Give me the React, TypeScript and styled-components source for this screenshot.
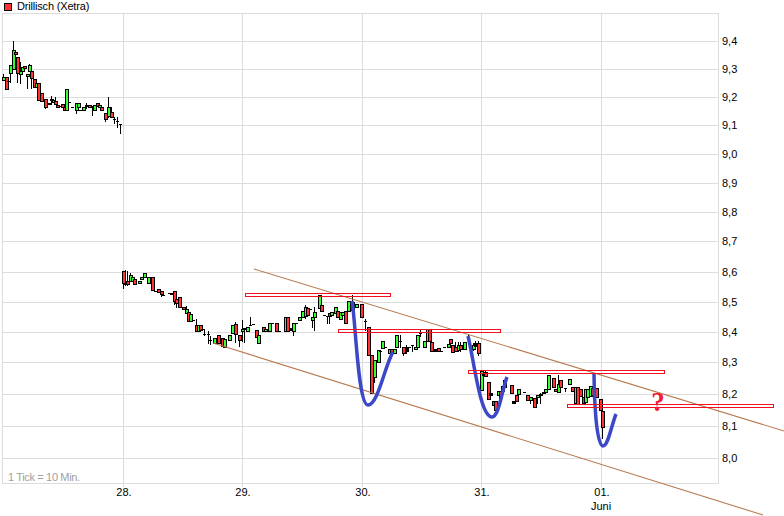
import styled, { createGlobalStyle } from "styled-components";

const GlobalStyle = createGlobalStyle`
  html, body {
    margin: 0;
    padding: 0;
    background: #fff;
  }
`;

// x, body top, body bottom, colour, wick top, wick bottom
type Candle = [number, number, number, "g" | "r" | "k", number?, number?];

const candles: Candle[] = [
  // first day, end of the week before
  [3, 77, 80, "g", 74, 80], [6, 77, 89, "r"], [8, 81, 81, "k"], [10, 65, 73, "g", 65, 82], [13, 50, 69, "g", 41, 69],
  [15, 52, 54, "r"], [17, 57, 73, "r", 57, 82], [20, 71, 74, "g", 62, 83], [22, 67, 71, "g"],
  [24, 66, 68, "r"], [27, 74, 76, "g", 74, 88], [29, 65, 71, "g", 64, 71], [31, 71, 78, "r", 71, 88],
  [34, 79, 87, "r"], [36, 83, 87, "g"], [38, 83, 100, "r"], [41, 93, 101, "r"],
  [45, 99, 107, "r", 99, 108], [48, 103, 104, "g"], [51, 99, 100, "k", 96, 104], [53, 100, 102, "g"],
  [55, 101, 104, "r", 97, 104], [57, 105, 107, "r"], [60, 106, 106, "k"], [62, 104, 107, "r"],
  [64, 107, 110, "r"], [66, 89, 110, "g"], [69, 102, 102, "k"], [72, 107, 107, "k"],
  [76, 103, 110, "g", 103, 113], [78, 103, 107, "g"], [80, 110, 110, "k"], [83, 107, 110, "g"],
  [86, 105, 106, "k", 103, 108], [89, 105, 107, "r"], [92, 106, 106, "k", 106, 115], [94, 105, 110, "g"],
  [97, 103, 106, "r"], [99, 105, 107, "g"], [101, 107, 110, "r"], [105, 113, 119, "r", 113, 121],
  [108, 107, 116, "g", 97, 117], [111, 112, 117, "r", 107, 117], [114, 119, 119, "k", 117, 123],
  [117, 121, 121, "k", 117, 127], [120, 124, 124, "k", 124, 133],
  // second day
  [123, 271, 283, "r", 271, 288], [125, 283, 284, "k", 270, 285], [127, 281, 284, "r", 271, 285],
  [130, 275, 281, "g", 273, 281], [132, 277, 281, "g"], [134, 279, 284, "r"], [139, 281, 283, "g"],
  [141, 277, 279, "g"], [144, 273, 277, "g"], [148, 277, 283, "g"], [152, 277, 290, "r"],
  [155, 291, 291, "k"], [158, 289, 292, "r"], [161, 291, 294, "r", 291, 296], [163, 295, 295, "k"],
  [169, 293, 293, "k"], [171, 293, 294, "k"], [174, 291, 301, "r", 291, 304], [176, 299, 303, "r", 299, 307],
  [179, 297, 307, "r"], [183, 307, 309, "r"], [186, 309, 313, "g", 306, 313], [188, 312, 321, "r"],
  [190, 314, 321, "g"], [193, 320, 320, "k"], [196, 325, 331, "r", 319, 331], [198, 325, 331, "g"],
  [200, 325, 330, "r"], [202, 329, 329, "k"], [204, 334, 334, "k", 329, 335], [208, 334, 334, "k", 331, 343],
  [210, 340, 340, "k", 336, 344], [214, 338, 343, "g"], [218, 335, 343, "r"], [222, 338, 346, "r"],
  [224, 339, 347, "g"], [229, 335, 340, "g"], [232, 325, 333, "g"], [235, 324, 334, "r", 322, 342],
  [239, 335, 340, "r", 335, 346], [242, 329, 331, "g", 320, 341], [244, 328, 329, "k", 328, 342],
  [247, 327, 331, "g"], [250, 325, 325, "k", 317, 325], [253, 324, 324, "k"], [256, 330, 337, "r"],
  [258, 335, 343, "g"], [263, 327, 331, "r"], [265, 329, 331, "g"], [269, 323, 331, "g"], [272, 323, 323, "k"],
  [276, 323, 331, "r"], [279, 331, 331, "k"], [285, 317, 331, "g"], [287, 317, 331, "r"], [290, 328, 330, "k"],
  [293, 323, 331, "g", 323, 335], [296, 323, 323, "k"], [299, 317, 320, "g"], [302, 311, 317, "g"],
  [305, 307, 316, "g", 305, 318], [307, 308, 315, "r"],
  [310, 309, 309, "k"], [312, 317, 320, "g", 317, 327], [314, 312, 317, "g", 307, 330], [319, 295, 308, "g"],
  [321, 305, 311, "r"], [324, 315, 315, "k"], [327, 316, 316, "k", 316, 323], [329, 313, 316, "r", 313, 323],
  [331, 312, 315, "g"], [335, 307, 313, "g"], [337, 311, 317, "r"], [340, 312, 319, "g"], [342, 312, 315, "g"],
  [345, 311, 323, "r"], [348, 301, 311, "g"], [352, 302, 310, "r", 295, 310], [356, 304, 307, "g"],
  [361, 304, 317, "r"], [365, 321, 321, "k", 319, 330],
  // third day
  [368, 327, 355, "r"], [371, 355, 393, "r"], [374, 360, 377, "g", 360, 382], [378, 350, 362, "g"],
  [380, 351, 351, "k"], [382, 341, 348, "g"], [385, 347, 347, "k"], [389, 349, 353, "g"],
  [391, 349, 353, "r"], [394, 349, 353, "g"], [396, 335, 347, "g"], [400, 341, 341, "k", 335, 347],
  [403, 347, 353, "r", 347, 355], [406, 347, 351, "k", 345, 353], [409, 347, 347, "k"], [412, 345, 345, "k", 345, 351],
  [415, 347, 349, "g"], [417, 335, 347, "g"], [420, 333, 333, "k", 330, 336], [424, 341, 347, "g"],
  [427, 329, 341, "g"], [429, 329, 341, "r"], [431, 342, 351, "r"], [434, 349, 351, "k"], [438, 348, 351, "r"],
  [441, 351, 351, "k"], [444, 347, 347, "k"], [448, 344, 347, "g"], [450, 339, 343, "r"], [452, 345, 352, "r"],
  [455, 347, 351, "r", 342, 351], [458, 345, 350, "g", 342, 351], [460, 345, 349, "r", 342, 351], [464, 342, 349, "g"],
  [468, 337, 337, "k", 334, 343], [473, 345, 349, "g", 343, 350], [475, 343, 346, "k", 341, 346],
  [478, 343, 353, "r", 341, 355],
  // fourth day
  [481, 371, 390, "g"], [483, 373, 375, "k"], [485, 372, 376, "r", 370, 376], [488, 382, 399, "r"],
  [490, 393, 395, "k", 393, 396], [493, 401, 405, "r"], [495, 401, 410, "r"], [498, 391, 395, "g"],
  [500, 391, 398, "r"], [502, 386, 391, "g"], [504, 380, 387, "g"], [511, 385, 393, "r"], [513, 401, 403, "k"],
  [516, 395, 401, "r"], [518, 389, 394, "g"], [524, 392, 392, "k"], [527, 395, 400, "r"], [530, 397, 400, "g", 397, 403],
  [534, 398, 407, "r"], [537, 395, 397, "g", 395, 403], [540, 394, 395, "k", 393, 403], [543, 392, 393, "k"],
  [545, 389, 392, "g"], [548, 375, 389, "g"], [553, 378, 387, "r"], [555, 389, 391, "r"], [558, 384, 392, "g", 375, 392],
  [560, 380, 387, "r"], [565, 388, 388, "k", 388, 391], [569, 379, 384, "g"], [572, 387, 391, "r"],
  [575, 387, 403, "g"], [577, 387, 404, "r"], [580, 389, 396, "r"], [583, 397, 403, "r"], [585, 389, 402, "g"],
  [587, 389, 397, "g"], [590, 386, 396, "g"], [592, 388, 395, "r"], [596, 388, 397, "r"],
  [600, 399, 410, "r"], [602, 411, 427, "r", 411, 438],
];

const FILL = { g: "#33ff33", r: "#ff3333", k: "#000" };

const priceLines = [
  ["9,4", 41], ["9,3", 69], ["9,2", 97], ["9,1", 125], ["9,0", 154],
  ["8,9", 183], ["8,8", 212], ["8,7", 241], ["8,6", 272], ["8,5", 302],
  ["8,4", 332], ["8,3", 362], ["8,2", 394], ["8,1", 426], ["8,0", 458],
] as const;

const days = [
  ["28.", 123], ["29.", 242], ["30.", 362], ["31.", 481], ["01.", 601],
] as const;

const levels = [
  [245, 293, 145], [338, 329, 162], [468, 370, 196], [567, 404, 206],
] as const;

const Page = styled.div`
  width: 784px;
  height: 516px;
  overflow: hidden;
  font-family: "Liberation Sans", Arial, sans-serif;
  display: flex;
  flex-direction: column;
`;

const Legend = styled.div`
  height: 13px;
  padding-left: 4px;
  display: flex;
  align-items: center;
  gap: 5px;
  font-size: 11px;
  line-height: 13px;
  letter-spacing: -0.18px;
  color: #000;
  box-sizing: border-box;
`;

const Swatch = styled.span`
  width: 6px;
  height: 6px;
  background: #ff3333;
  border: 1px solid #000;
`;

const Chart = styled.svg`
  display: block;
  flex: none;
  font-family: "Liberation Sans", Arial, sans-serif;
  font-size: 11px;
`;

const TickNote = styled.text`
  fill: #a0a0a0;
  letter-spacing: -0.35px;
`;

const QuestionMark = styled.text`
  fill: #f01c3c;
  font-family: "Liberation Serif", serif;
  font-size: 27px;
  font-weight: 700;
`;

export default function App() {
  return (
    <Page>
      <GlobalStyle />
      <Legend>
        <Swatch />
        Drillisch (Xetra)
      </Legend>
      <Chart width={784} height={503} viewBox="0 13 784 503">
        <g stroke="#dcdcdc" shapeRendering="crispEdges" fill="none">
          <rect x={2.5} y={13.5} width={716} height={470} />
          {priceLines.map(([label, y]) => (
            <line key={label} x1={2} x2={718} y1={y + 0.5} y2={y + 0.5} />
          ))}
          {days.map(([label, x]) => (
            <line key={label} x1={x + 0.5} x2={x + 0.5} y1={13} y2={487} />
          ))}
        </g>

        {priceLines.map(([label, y]) => (
          <text key={label} x={722} y={y + 4}>{label}</text>
        ))}
        {days.map(([label, x]) => (
          <text key={label} x={x + 1} y={496} textAnchor="middle">{label}</text>
        ))}
        <text x={601} y={510} textAnchor="middle">Juni</text>
        <TickNote x={8} y={481}>1 Tick = 10 Min.</TickNote>

        <g shapeRendering="crispEdges">
          {candles.map(([x, top, bottom, colour, wickTop, wickBottom]) => (
            <g key={x}>
              {wickTop !== undefined && (
                <rect x={x} y={wickTop} width={1} height={(wickBottom ?? bottom) - wickTop + 1} fill="#000" />
              )}
              {top === bottom ? (
                <rect x={x - 1} y={top} width={3} height={1} fill="#000" />
              ) : (
                <>
                  <rect x={x - 1} y={top} width={4} height={bottom - top + 1} fill="#000" />
                  <rect x={x} y={top + 1} width={2} height={bottom - top - 1} fill={FILL[colour]} />
                </>
              )}
            </g>
          ))}
        </g>

        <g stroke="#b87a50" strokeWidth={1.1} fill="none">
          <line x1={254} y1={269} x2={784} y2={431} />
          <line x1={213} y1={343} x2={763} y2={515} />
        </g>

        <g fill="none" stroke="#3c48c8" strokeWidth={3.5}>
          <path d="M352 301 C356 325 358 405 368 405 C378 405 385 365 393 352" />
          <path d="M468 336 C474 360 480 417 492 417 C499 417 502 390 507 377" />
          <path d="M594 374 C594 395 596 446 603 446 C608 446 611 427 616 414" />
        </g>

        <g fill="none" stroke="#f01020" shapeRendering="crispEdges">
          {levels.map(([x, y, w]) => (
            <rect key={y} x={x + 0.5} y={y + 0.5} width={w} height={3} />
          ))}
        </g>

        <QuestionMark x={658} y={411} textAnchor="middle">?</QuestionMark>
      </Chart>
    </Page>
  );
}
